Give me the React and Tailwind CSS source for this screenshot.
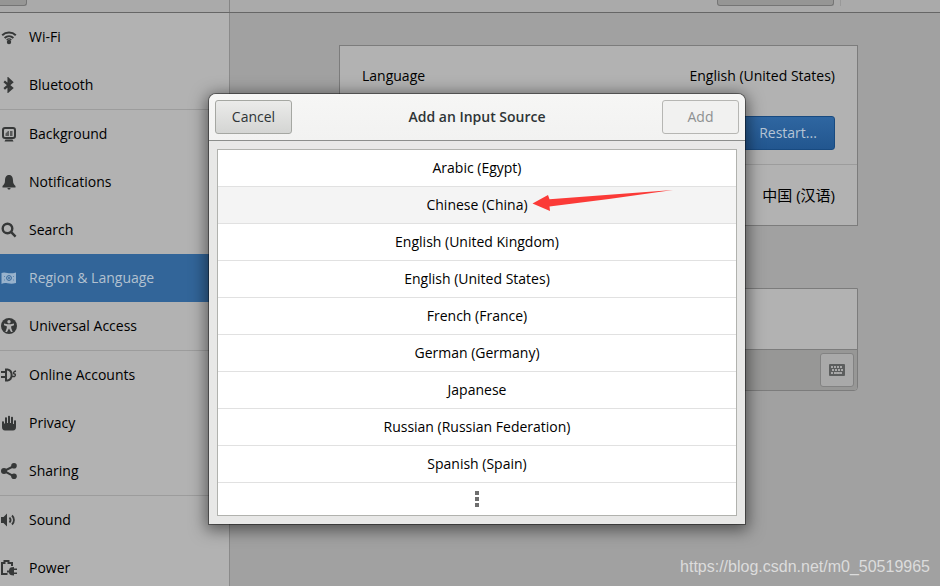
import React, { useState } from 'react';

const icons = {
  wifi: (
    <>
      <path d="M1.200 6.200C5 2.600 11 2.600 14.800 6.200M3.600 9C6.200 6.600 9.800 6.600 12.400 9" fill="none" stroke="currentColor" strokeWidth="2" />
      <path d="M5.600 11C7 9.800 9 9.800 10.400 11" fill="none" stroke="currentColor" strokeWidth="1.200" />
      <circle cx="8" cy="13" r="2.200" />
    </>
  ),
  bluetooth: (
    <path d="M3.200 4.400 11 11 7.600 14V2L11 5.200 3.200 11.800" fill="none" stroke="currentColor" strokeWidth="2.300" />
  ),
  background: (
    <>
      <rect x="2" y="2" width="12" height="10" rx="2" fill="none" stroke="currentColor" strokeWidth="2" />
      <path d="M4.500 10V7.500L7 5h1v5zM9 5h2.500v5H9z" opacity=".7" />
      <path d="M4.500 13.500h7l1 2h-9z" />
    </>
  ),
  notifications: (
    <path d="M8 1C5 1 4 3.500 4 6.500c0 3-1 4-2.500 5.500v1.500h13V12C13 10.500 12 9.500 12 6.500 12 3.500 11 1 8 1zM6.500 14h3c0 1-.5 1.500-1.500 1.500S6.500 15 6.500 14z" />
  ),
  search: (
    <path d="M10.200 10.200 14.600 14.600M11.300 6.500a4.800 4.800 0 1 1-9.600 0 4.800 4.800 0 0 1 9.600 0z" fill="none" stroke="currentColor" strokeWidth="2.400" />
  ),
  region: (
    <>
      <path d="M.5 3c2-1 4-.5 6 0s5 .5 8.500-.5v10.500c-3 1-6 .8-8.500.3s-4-.3-6 .7z" />
      <g fill="none" stroke="#326599">
        <circle cx="8" cy="8" r="2.400" />
        <path d="M3.500 6v1M3.500 9.500v1M12.500 6v1M12.500 9.500v1" strokeOpacity=".6" />
      </g>
      <circle cx="8" cy="8" r=".9" fill="#326599" />
    </>
  ),
  access: (
    <>
      <circle cx="8" cy="8" r="8" />
      <circle cx="8" cy="3.800" r="1.700" fill="#b2b2b2" />
      <path d="M3 5.500 6.500 6.300h3L13 5.500v1.800L10.200 8.300v1.600l1.500 4H10L8 10.500 6 13.900H4.300l1.500-4V8.300L3 7.300z" fill="#b2b2b2" />
    </>
  ),
  accounts: (
    <>
      <path d="M0 5h4M0 10h4" stroke="currentColor" strokeWidth="2" />
      <path d="M5 2.500h1.500c5.500 1 5.500 10 0 11H5z" fill="none" stroke="currentColor" strokeWidth="2" />
      <path d="M10.500 9.500h3c1.500-1 1-2.500 0-2.500-1.500 0-1.500-2.500 1.500-3" fill="none" stroke="currentColor" strokeWidth="1.300" />
    </>
  ),
  privacy: (
    <path d="M1 7c0-1 2-1 2 0v1.500h1V3c0-1 2-1 2 0v5h1V1.500c0-1 2-1 2 0V8h1V2.500c0-1 2-1 2 0V9h1V6c0-1 2-1 2 0v6c0 2-1 3.500-3 3.500H4c-2 0-3-1.500-3-3.500z" />
  ),
  sharing: (
    <>
      <path d="M13 3 3 8l10 5.300" fill="none" stroke="currentColor" strokeWidth="2" />
      <circle cx="13" cy="2.800" r="2.800" />
      <circle cx="3" cy="8" r="3" />
      <circle cx="13" cy="13.200" r="2.800" />
    </>
  ),
  sound: (
    <>
      <path d="M0 5h2.500L6 1.500v13L2.500 11H0z" />
      <path d="M8.500 5.500c1.300 1.500 1.300 3.500 0 5M11 3.500c2.600 2.600 2.600 6.400 0 9" fill="none" stroke="currentColor" strokeWidth="1.800" />
    </>
  ),
  power: (
    <>
      <path d="M6.500 14H1V3h2.500V1h4v2H11v3" fill="none" stroke="currentColor" strokeWidth="2" />
      <path d="M6 10.500h2C8 8 9.500 7 13 7v1.500h3V10h-3v2.500h3V14h-3v1.500c-3.500 0-5-1-5-3H6z" />
    </>
  ),
};

const panelGroups = [
  [
    { label: 'Wi-Fi', icon: 'wifi' },
    { label: 'Bluetooth', icon: 'bluetooth' },
  ],
  [
    { label: 'Background', icon: 'background' },
    { label: 'Notifications', icon: 'notifications' },
    { label: 'Search', icon: 'search' },
    { label: 'Region & Language', icon: 'region' },
    { label: 'Universal Access', icon: 'access' },
  ],
  [
    { label: 'Online Accounts', icon: 'accounts' },
    { label: 'Privacy', icon: 'privacy' },
    { label: 'Sharing', icon: 'sharing' },
  ],
  [
    { label: 'Sound', icon: 'sound' },
    { label: 'Power', icon: 'power' },
  ],
];

const sources = [
  'Arabic (Egypt)',
  'Chinese (China)',
  'English (United Kingdom)',
  'English (United States)',
  'French (France)',
  'German (Germany)',
  'Japanese',
  'Russian (Russian Federation)',
  'Spanish (Spain)',
];

const Sidebar = () => (
  <nav className="w-[230px] shrink-0 border-r border-[#8a8a8a] bg-[#b2b2b2]">
    {panelGroups.map((group, i) => (
      <ul key={i} className={i > 0 ? 'border-t border-[#9c9c9c]' : ''}>
        {group.map(({ label, icon }) => {
          const active = icon === 'region';
          return (
            <li key={label}>
              <a
                href="#"
                className={`flex h-12 items-center gap-3 pl-px ${active ? 'bg-[#326599] text-[#b2c1d0]' : 'text-black'}`}
              >
                <svg
                  viewBox="0 0 16 16"
                  className={`h-4 w-4 shrink-0 fill-current ${active ? 'text-[#98b2cc]' : 'text-[#363838]'}`}
                >
                  {icons[icon]}
                </svg>
                {label}
              </a>
            </li>
          );
        })}
      </ul>
    ))}
  </nav>
);

const RegionPanel = () => (
  <main className="flex min-w-0 flex-1 flex-col gap-[62px] bg-[#a1a1a1] pt-8 pr-[82px] pl-[109px]">
    <section className="border border-[#7c7c7c] bg-[#b2b2b2]">
      <div className="flex h-[60px] items-center justify-between px-[22px]">
        <span>Language</span>
        <span>English (United States)</span>
      </div>
      <div className="flex h-[58px] items-center justify-end px-[22px] pb-1">
        <button className="h-[34px] w-[94px] rounded-[3px] border border-[#184a80] bg-linear-to-b from-[#2f66a1] to-[#22568f] text-[#b6c5d5]">
          Restart...
        </button>
      </div>
      <div className="flex h-[61px] items-center justify-between border-t border-[#9c9c9c] px-[22px]">
        <span>Formats</span>
        <span className="text-[15px]">中国 (汉语)</span>
      </div>
    </section>

    <section className="rounded-b-[4px] border border-[#7c7c7c] bg-[#b2b2b2]">
      <div className="h-[60px]" />
      <div className="flex h-[41px] items-center justify-end rounded-b-[3px] border-t border-[#7c7c7c] bg-[#979796] pr-[3px]">
        <button
          aria-label="Show keyboard layout"
          className="flex h-[34px] w-[34px] items-center justify-center rounded-[3px] border border-[#828282] bg-[#a9a9a9]"
        >
          <svg viewBox="0 0 16 12" className="h-3 w-4">
            <rect width="16" height="12" rx="1" fill="#5c5e5e" />
            <path
              d="M2 3h12M3 6h11M2 9h12"
              stroke="#a9a9a9"
              strokeWidth="1.800"
              strokeDasharray="2 1"
            />
            <path d="M5 9h6" stroke="#a9a9a9" strokeWidth="1.800" />
          </svg>
        </button>
      </div>
    </section>
  </main>
);

const AddSourceDialog = () => {
  const [selected, setSelected] = useState('Chinese (China)');

  return (
    <div
      role="dialog"
      aria-labelledby="dialog-title"
      className="w-[536px] rounded-t-[7px] bg-[#e8e8e7] shadow-[0_0_0_1px_rgba(0,0,0,0.4),0_3px_16px_3px_rgba(0,0,0,0.5)]"
    >
      <header className="flex h-[47px] items-center justify-between rounded-t-[7px] border-b border-[#8c8e8c] bg-linear-to-b from-[#f6f6f5] to-[#f2f2f1] px-1.5">
        <button className="h-[34px] w-[77px] rounded-[3px] border border-[#a5a7a2] bg-linear-to-b from-[#ebebea] to-[#d4d5d3] text-[#2e3436]">
          Cancel
        </button>
        <h1 id="dialog-title" className="font-semibold text-[#2e3436]">
          Add an Input Source
        </h1>
        <button disabled className="h-[34px] w-[77px] rounded-[3px] border border-[#b6b6b3] bg-[#f1f1f0] text-[#8d9091]">
          Add
        </button>
      </header>
      <div className="p-2">
        <ul className="border border-[#b1b2ae] bg-white">
          {sources.map((name) => (
            <li key={name} className="border-b border-[#e1e1e1]">
              <button
                onClick={() => setSelected(name)}
                className={`block h-9 w-full text-black ${selected === name ? 'bg-[#f4f4f4]' : ''}`}
              >
                {name}
              </button>
            </li>
          ))}
          <li>
            <button aria-label="More" className="flex h-8 w-full flex-col items-center justify-center gap-0.5">
              <span className="h-1 w-1 bg-[#6e6e6e]" />
              <span className="h-1 w-1 bg-[#6e6e6e]" />
              <span className="h-1 w-1 bg-[#6e6e6e]" />
            </button>
          </li>
        </ul>
      </div>
    </div>
  );
};

const App = () => (
  <div className="relative flex h-screen flex-col overflow-hidden bg-[#a1a1a1] font-['Open_Sans','Noto_Sans_CJK_SC',sans-serif] text-[14px] leading-5">
    <header className="flex h-[13px] shrink-0 items-start border-b border-[#666] bg-[#aaa]">
      <div className="flex h-3 w-[230px] items-start border-r border-[#858585]">
        <button aria-label="Back" className="h-1.5 w-[27px] rounded-br-[3px] border-r border-b border-[#757575] bg-[#969695]" />
      </div>
      <div className="flex flex-1 items-start justify-end gap-1.5 pr-[99px]">
        <button aria-label="Login Screen" className="h-1.5 w-[117px] rounded-b-[3px] border border-t-0 border-[#757575] bg-[#969695]" />
        <span className="h-1.5 w-px bg-[#999]" />
      </div>
    </header>

    <div className="flex min-h-0 flex-1">
      <Sidebar />
      <RegionPanel />
    </div>

    <div className="absolute inset-0 flex items-start justify-center pt-[94px] pl-[14px]">
      <AddSourceDialog />
    </div>

    {/* arrow pointing at the Chinese row */}
    <svg viewBox="0 0 142 22" className="absolute top-[190px] left-[532px] h-[22px] w-[142px]">
      <path d="M.5 13.500 16 5l1.500 4.300Q80 4.500 141 0 80 9 17.500 16.500L18 21z" fill="#fb3a37" />
    </svg>

    <p className="absolute right-[10px] bottom-[9px] font-['Liberation_Sans',sans-serif] text-[16px] text-[#dcdcdc]">
      https://blog.csdn.net/m0_50519965
    </p>
  </div>
);

export default App;
